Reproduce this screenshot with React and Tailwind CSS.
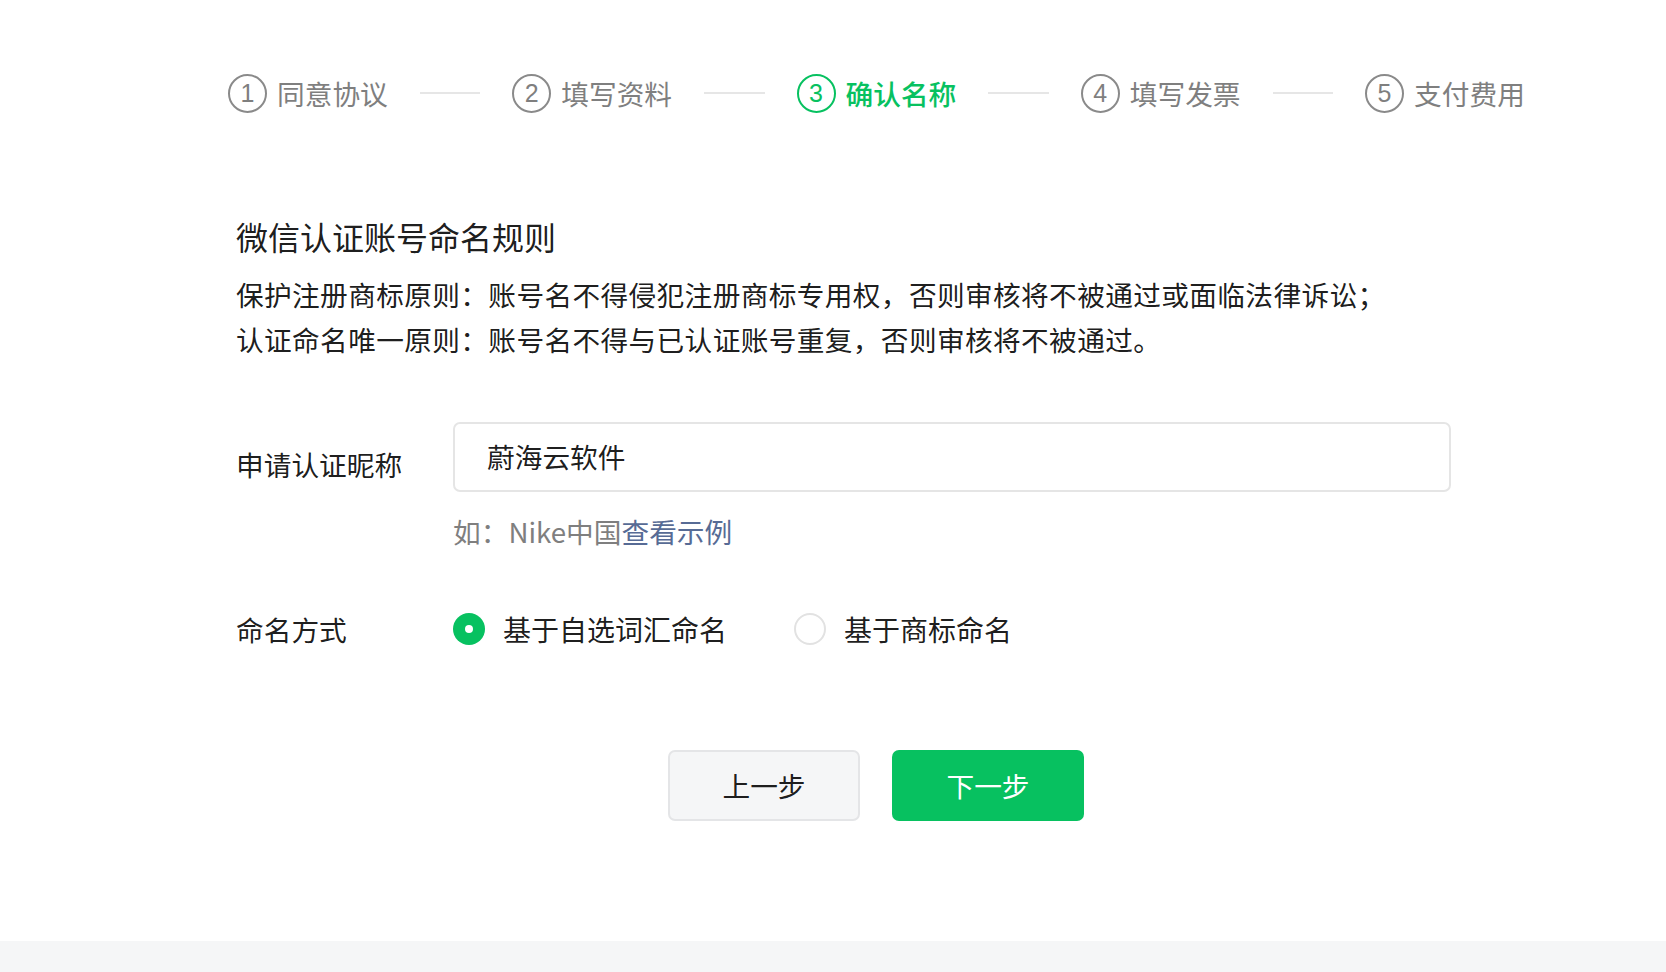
import React from "react";

const font = { fontFamily: '"Noto Sans CJK SC", "Liberation Sans", sans-serif' };

function Step({ n, label, active }) {
  return (
    <div className="flex shrink-0 items-center gap-[10px] whitespace-nowrap">
      <div
        className={
          "flex h-[39px] w-[39px] shrink-0 items-center justify-center rounded-full border-2 text-[25px] leading-none " +
          (active ? "border-[#07c160] text-[#07c160]" : "border-[#8a8a8a] text-[#7f7f7f]")
        }
        style={{ fontFamily: '"Liberation Sans", Arial, sans-serif' }}
      >
        {n}
      </div>
      <div
        className={
          "text-[27.7px] leading-[40px] " +
          (active ? "font-medium text-[#07c160]" : "text-[#7f7f7f]")
        }
      >
        {label}
      </div>
    </div>
  );
}

function Line() {
  return <div className="mx-[32px] h-[2px] w-[60.5px] shrink-0 bg-[#e6e6e6]" />;
}

export default function App() {
  return (
    <div className="flex h-[972px] w-full flex-col bg-white" style={font}>
      <div className="flex-1">
        <div className="ml-[228px] w-[1320px]">
          <div className="flex items-center pt-[73px]">
            <Step n="1" label="同意协议" />
            <Line />
            <Step n="2" label="填写资料" />
            <Line />
            <Step n="3" label="确认名称" active />
            <Line />
            <Step n="4" label="填写发票" />
            <Line />
            <Step n="5" label="支付费用" />
          </div>

          <div className="pl-[8px] text-[rgba(0,0,0,0.9)]">
            <div className="mt-[101px] text-[32px] leading-[44px]">微信认证账号命名规则</div>
            <div className="mt-[14px] whitespace-nowrap text-[27.7px] leading-[45px] tracking-[0.35px]">
              <div>保护注册商标原则：账号名不得侵犯注册商标专用权，否则审核将不被通过或面临法律诉讼；</div>
              <div>认证命名唯一原则：账号名不得与已认证账号重复，否则审核将不被通过。</div>
            </div>

            <div className="mt-[60px] flex items-start">
              <div className="w-[217px] pt-[22px] text-[27.7px] leading-[40px]">申请认证昵称</div>
              <div className="flex flex-col">
                <div className="flex h-[70px] w-[998px] items-center rounded-[7px] border-2 border-[#e5e5e5] pl-[32px] text-[27.7px]">
                  蔚海云软件
                </div>
                <div className="mt-[19px] text-[27.7px] leading-[40px] text-[#7f7f7f]">
                  如：Nike中国<span className="text-[#576b95]">查看示例</span>
                </div>
              </div>
            </div>

            <div className="mt-[58px] flex items-center">
              <div className="w-[217px] text-[27.7px] leading-[40px]">命名方式</div>
              <div className="flex items-center">
                <div className="flex h-[32px] w-[32px] items-center justify-center rounded-full bg-[#07c160]">
                  <div className="h-[8px] w-[8px] rounded-full bg-white" />
                </div>
                <div className="ml-[18px] text-[28px] leading-[40px]">基于自选词汇命名</div>
              </div>
              <div className="ml-[67px] flex items-center">
                <div className="h-[32px] w-[32px] rounded-full border-2 border-[#e2e2e2]" />
                <div className="ml-[18px] text-[28px] leading-[40px]">基于商标命名</div>
              </div>
            </div>
          </div>

          <div className="mt-[101px] flex w-[1296px] justify-center gap-[32px]">
            <button className="flex h-[71px] w-[192px] items-center justify-center rounded-[7px] border-2 border-[#e4e5e7] bg-[#f5f6f7] text-[27.7px] text-[rgba(0,0,0,0.9)]">
              上一步
            </button>
            <button className="flex h-[71px] w-[192px] items-center justify-center rounded-[7px] bg-[#07c160] text-[27.7px] text-white">
              下一步
            </button>
          </div>
        </div>
      </div>
      <div className="h-[31px] w-full bg-[#f5f6f7]" />
    </div>
  );
}
